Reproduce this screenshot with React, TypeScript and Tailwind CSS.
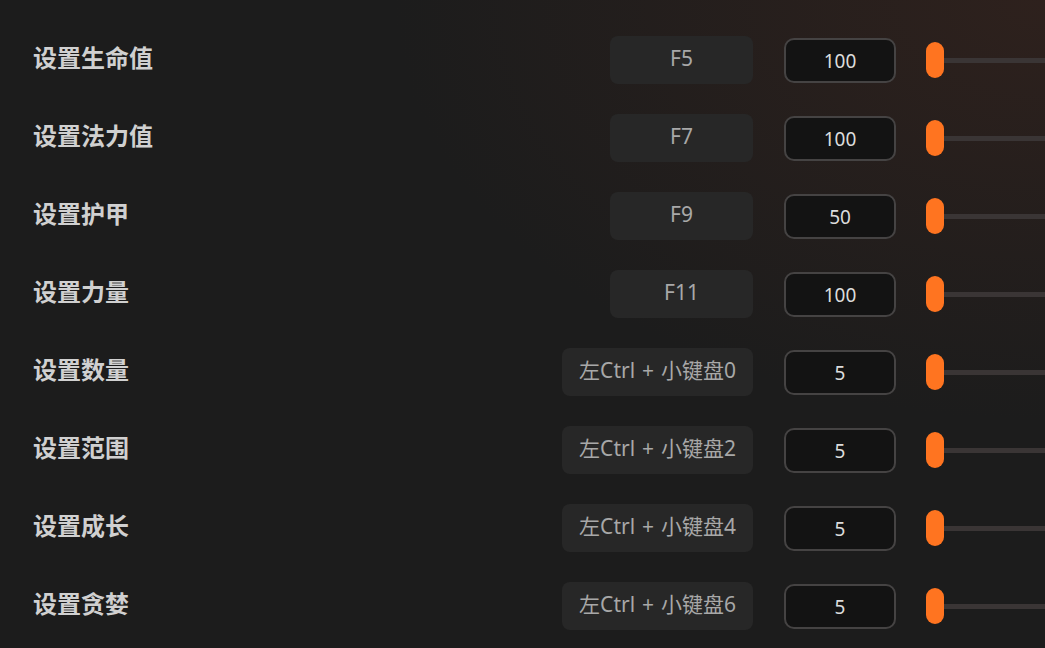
import React from 'react';

const rows = [
  { label: '设置生命值', key: 'F5', value: '100' },
  { label: '设置法力值', key: 'F7', value: '100' },
  { label: '设置护甲', key: 'F9', value: '50' },
  { label: '设置力量', key: 'F11', value: '100' },
  { label: '设置数量', key: '左Ctrl + 小键盘0', value: '5' },
  { label: '设置范围', key: '左Ctrl + 小键盘2', value: '5' },
  { label: '设置成长', key: '左Ctrl + 小键盘4', value: '5' },
  { label: '设置贪婪', key: '左Ctrl + 小键盘6', value: '5' },
];

const App = () => {
  return (
    <div
      className="w-[1045px] h-[648px] overflow-hidden bg-[#1c1c1c] bg-[radial-gradient(ellipse_650px_420px_at_100%_0%,#2e211d_0%,#1c1c1c_100%)] pt-[21px]"
      style={{ fontFamily: '"Noto Sans", "Noto Sans CJK SC", sans-serif' }}
    >
      {rows.map((row, i) => (
        <div key={i} className="h-[78px] flex items-center pl-[33px]">
          <div className="flex-1 text-[24px] font-semibold text-[#d0d0d0] leading-none -mt-[4px]">{row.label}</div>
          <div className="min-w-[143px] h-[48px] px-[17px] rounded-lg bg-[#272727] flex items-center justify-center text-[21px] text-[#a8a8a8] pb-[3px] whitespace-pre [word-spacing:1.5px]">
            {row.key}
          </div>
          <div className="ml-[31px] w-[112px] h-[45px] rounded-[10px] border-2 border-[#454343] bg-[#131313] flex items-center justify-center text-[19px] text-[#dcdcdc] pt-[2px]">
            {row.value}
          </div>
          <div className="ml-[30px] w-[119px] flex items-center">
            <div className="w-[18px] h-[36px] rounded-full bg-[#ff7420] shrink-0" />
            <div className="flex-1 h-[5px] bg-[#3a3535]" />
          </div>
        </div>
      ))}
    </div>
  );
};

export default App;
